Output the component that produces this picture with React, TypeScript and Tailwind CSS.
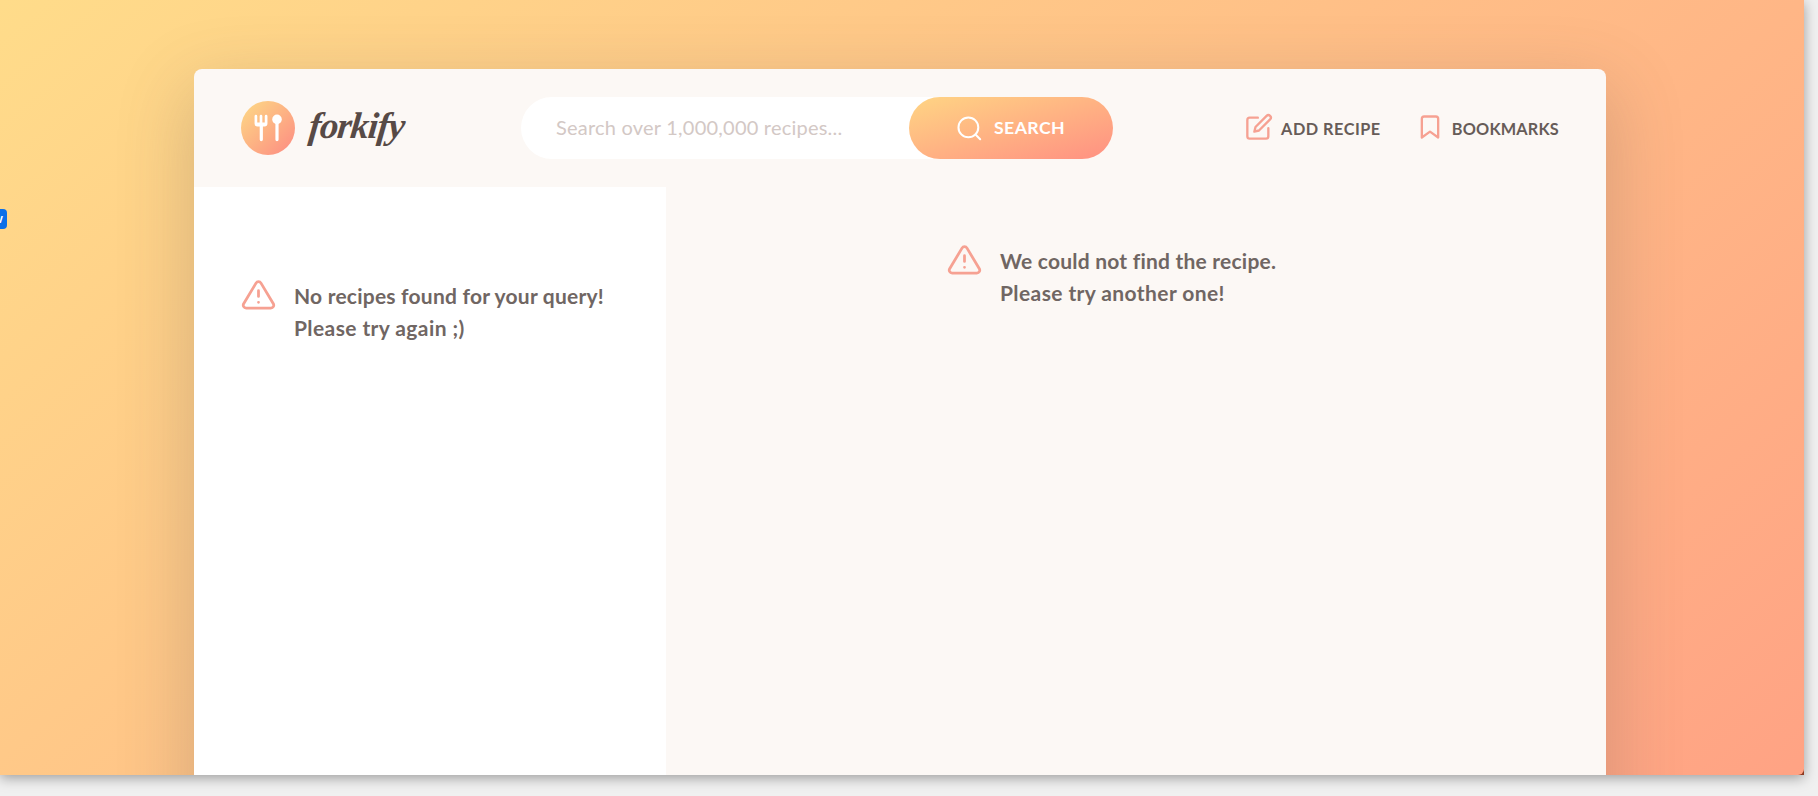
import type { ReactNode } from 'react';

const stroke = {
  viewBox: '0 0 24 24',
  fill: 'none',
  stroke: 'currentColor',
  strokeLinecap: 'round' as const,
  strokeLinejoin: 'round' as const,
};

function Logo() {
  return (
    <div className="flex items-center">
      <svg className="h-[54px] w-[54px]" viewBox="0 0 54 54">
        <defs>
          <linearGradient id="logo" x1="0" y1="0" x2="1" y2="1">
            <stop offset="0.1" stopColor="#fdd385" />
            <stop offset="0.95" stopColor="#fd8e82" />
          </linearGradient>
        </defs>
        <circle cx="27" cy="27" r="27" fill="url(#logo)" />
        <g fill="none" stroke="#fff" strokeLinecap="round" strokeLinejoin="round">
          <path d="M14.9 15.2v7.4q0 1.6 1.6 1.6h7q1.6 0 1.6-1.6v-7.4M20 15.2v9" strokeWidth="2.7" />
          <path d="M20.3 24v14.6M36 22v16.6" strokeWidth="3.2" />
        </g>
        <path d="M15.8 21.5h8.6v3h-8.6z" fill="#fff" />
        <circle cx="36" cy="18.4" r="4.8" fill="#fff" />
      </svg>
      <span className="ml-[14px] inline-block w-[100px] -translate-y-[3px] -skew-x-6 whitespace-nowrap font-['Liberation_Serif',serif] text-[37px] leading-none font-bold tracking-[-1.1px] text-[#574a46] italic">
        forkify
      </span>
    </div>
  );
}

function NavButton({ icon, children }: { icon: ReactNode; children: ReactNode }) {
  return (
    <button className="flex items-center gap-[8px] text-[16.3px] font-bold whitespace-nowrap text-[#675c58] uppercase">
      <svg {...stroke} strokeWidth="2" className="h-[28px] w-[28px] -translate-y-px text-[#f6a192]">
        {icon}
      </svg>
      <span className="translate-y-px">{children}</span>
    </button>
  );
}

function Message({ first, second }: { first: string; second: string }) {
  return (
    <div className="flex">
      <svg {...stroke} strokeWidth="1.9" className="mr-[18px] h-[35px] w-[35px] shrink-0 translate-y-[0.5px] text-[#f6a192]">
        <path d="M10.29 3.86 1.82 18a2 2 0 0 0 1.71 3h16.94a2 2 0 0 0 1.71-3L13.71 3.86a2 2 0 0 0-3.42 0z" />
        <path d="M12 9v4M12 17h.01" />
      </svg>
      <p className="mt-[3px] text-[21px] leading-[32px] font-bold tracking-[0.22px] whitespace-nowrap text-[#706663]">
        {first}
        <br />
        <span className="tracking-[0.4px]">{second}</span>
      </p>
    </div>
  );
}

export default function App() {
  return (
    <div className="relative h-[796px] w-[1818px] overflow-hidden bg-[#f0f0f0] font-[Lato,sans-serif] text-[#615551]">
      <div className="h-[775px] w-[1804px] bg-[#8c3a22] shadow-[0_3px_12px_rgba(0,0,0,0.35)]">
        <div className="h-full overflow-hidden rounded-br-[6px] bg-[linear-gradient(to_bottom_right,#ffdc8a,#ff9082)] bg-[length:1804px_1515px] bg-no-repeat pt-[69px] pl-[194px]">
          <main className="h-[1377px] w-[1412px] overflow-hidden rounded-[8px] bg-[#fcf8f5] shadow-[0_24px_71px_6px_rgba(97,85,81,0.24)]">
            <header className="flex h-[118px] items-center px-[47px]">
              <Logo />
              <form className="ml-[112px] flex h-[62px] w-[592px] items-center rounded-full bg-white">
                <span className="flex-1 -translate-y-px pl-[35px] text-[20px] tracking-[0.22px] whitespace-nowrap text-[#d3c8c5]">
                  Search over 1,000,000 recipes...
                </span>
                <button
                  type="button"
                  className="flex h-full w-[204px] items-center rounded-full bg-[linear-gradient(to_bottom_right,#ffd584,#ff9082)] pl-[47px] text-[17.7px] font-bold tracking-[0.4px] text-white"
                >
                  <svg {...stroke} strokeWidth="1.8" className="mr-[11px] h-[27px] w-[27px]">
                    <circle cx="11" cy="11" r="8.8" />
                    <path d="m21.5 21.5-4.2-4.2" />
                  </svg>
                  SEARCH
                </button>
              </form>
              <nav className="ml-auto flex gap-[35px]">
                <div className="tracking-[0.5px]">
                  <NavButton
                    icon={
                      <>
                        <path d="M11 4H4a2 2 0 0 0-2 2v14a2 2 0 0 0 2 2h14a2 2 0 0 0 2-2v-7" />
                        <path d="M18.5 2.5a2.121 2.121 0 0 1 3 3L12 15l-4 1 1-4 9.5-9.5z" />
                      </>
                    }
                  >
                    Add recipe
                  </NavButton>
                </div>
                <div className="tracking-[0.2px]">
                  <NavButton icon={<path d="m19 21-7-5-7 5V5a2 2 0 0 1 2-2h10a2 2 0 0 1 2 2z" />}>Bookmarks</NavButton>
                </div>
              </nav>
            </header>
            <div className="flex h-full">
              <aside className="w-[472px] bg-white pt-[90px] pl-[47px]">
                <Message first="No recipes found for your query!" second="Please try again ;)" />
              </aside>
              <section className="flex flex-1 items-start pt-[55px] pl-[281px]">
                <Message first="We could not find the recipe." second="Please try another one!" />
              </section>
            </div>
          </main>
        </div>
      </div>
      <div className="absolute top-[209px] left-0 flex h-[20px] w-[7px] items-center justify-end overflow-hidden rounded-r-[4px] bg-[#0b6fe8] pr-[4px] text-[13px] font-bold text-white">
        w
      </div>
    </div>
  );
}
